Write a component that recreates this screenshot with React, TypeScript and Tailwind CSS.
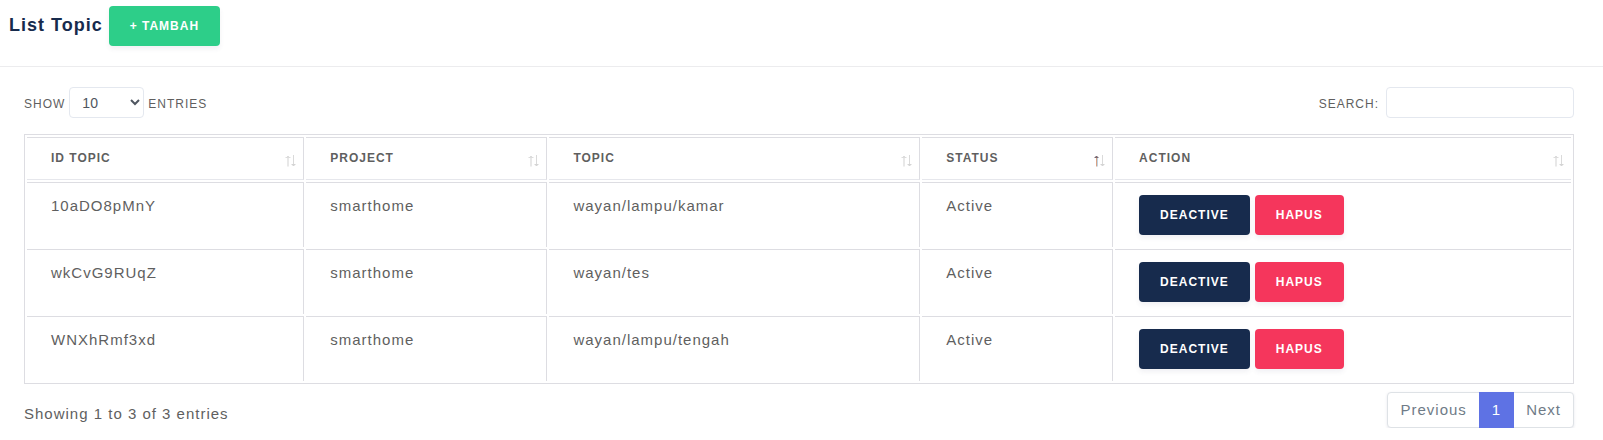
import { useState } from "react";

type Topic = { id: string; project: string; topic: string; status: string };

const topics: Topic[] = [
  { id: "10aDO8pMnY", project: "smarthome", topic: "wayan/lampu/kamar", status: "Active" },
  { id: "wkCvG9RUqZ", project: "smarthome", topic: "wayan/tes", status: "Active" },
  { id: "WNXhRmf3xd", project: "smarthome", topic: "wayan/lampu/tengah", status: "Active" },
];

const columns = [
  { label: "ID Topic", width: "w-[18.05%]" },
  { label: "Project", width: "w-[15.7%]" },
  { label: "Topic", width: "w-[24.15%]" },
  { label: "Status", width: "w-[12.42%]", sorted: true },
  { label: "Action", width: "w-[29.68%]" },
];

const buttonBase =
  "cursor-pointer rounded px-[21px] py-2.5 text-[12px] leading-5 font-bold uppercase tracking-[1px] text-white shadow-[0_3px_5px_rgba(50,50,93,0.07)]";

function SortIcon({ sorted }: { sorted?: boolean }) {
  return (
    <svg width="12" height="12" viewBox="0 0 12 12" fill="none" className="shrink-0" aria-hidden="true">
      {sorted ? (
        <>
          <path d="M3.5 11.5V1" stroke="#d9a184" />
          <path d="M4.5 11.5V3" stroke="#bcd3e2" />
          <path d="M1.5 2.5H5.5M2.5 1.5H4.5" stroke="#7a6a72" />
        </>
      ) : (
        <>
          <path d="M4 11.5V1" stroke="#e8e8e8" strokeWidth="2" />
          <path d="M1.5 2.5H6.5M3 1.5H5" stroke="#dcdcdc" />
        </>
      )}
      <path d="M9.5 0V11" stroke="#dadada" />
      <path d="M7.5 9.5H11.5M8.5 10.5H10.5" stroke="#d4d4d4" />
    </svg>
  );
}

export default function App() {
  const [query, setQuery] = useState("");
  const rows = topics.filter((t) =>
    Object.values(t).some((v) => v.toLowerCase().includes(query.toLowerCase())),
  );

  return (
    <main className="bg-white font-['Liberation_Sans',Arial,sans-serif] text-[15px] leading-6 tracking-[1px] text-[#5f5f5f]">
      <header className="flex items-start gap-1.5 border-b border-[#ececee] px-[9px] pt-1.5 pb-5">
        <h3 className="pt-[7px] text-[18px] leading-6 font-bold text-[#172b4d]">List Topic</h3>
        <button type="button" className={`${buttonBase} bg-[#2dce89]`}>
          + Tambah
        </button>
      </header>

      <div className="pt-5 pr-[29px] pl-6">
        <div className="flex items-center justify-between text-[12px] uppercase">
          <label className="flex items-center gap-1">
            <span className="pt-0.5">Show</span>
            <select className="h-[31px] w-[75px] rounded border border-[#e4e8ef] bg-white px-2 text-[14px] tracking-normal text-[#4f5660]">
              <option>10</option>
              <option>25</option>
              <option>50</option>
              <option>100</option>
            </select>
            <span className="pt-0.5">entries</span>
          </label>
          <label className="flex items-center gap-[7px]">
            <span className="pt-0.5">Search:</span>
            <input
              type="search"
              value={query}
              onChange={(e) => setQuery(e.target.value)}
              className="h-[31px] w-[188px] rounded border border-[#e4e8ef] bg-white px-2 text-[14px] outline-none"
            />
          </label>
        </div>

        <table className="mt-4 w-full table-fixed border-separate border-spacing-[2px] border border-[#dddde2]">
          <thead>
            <tr>
              {columns.map((c) => (
                <th
                  key={c.label}
                  scope="col"
                  className={`${c.width} h-[43px] border-y border-r border-[#dddde2] border-b-[#e6e7ec] pr-[7px] pl-6 text-left align-top text-[12px] leading-4 font-bold uppercase last:border-r-0`}
                >
                  <div className="flex items-start justify-between pt-3">
                    <span>{c.label}</span>
                    <span className="pt-[5px]">
                      <SortIcon sorted={c.sorted} />
                    </span>
                  </div>
                </th>
              ))}
            </tr>
          </thead>
          <tbody>
            {rows.map((t) => (
              <tr key={t.id}>
                {[t.id, t.project, t.topic, t.status].map((value, i) => (
                  <td key={i} className="border-t border-r border-[#dddde2] px-6 pt-[11px] align-top">
                    {value}
                  </td>
                ))}
                <td className="border-t border-[#dddde2] px-6 py-3">
                  <div className="flex gap-[5px]">
                    <button type="button" className={`${buttonBase} bg-[#172b4d]`}>
                      Deactive
                    </button>
                    <button type="button" className={`${buttonBase} bg-[#f5365c]`}>
                      Hapus
                    </button>
                  </div>
                </td>
              </tr>
            ))}
          </tbody>
        </table>

        <div className="flex items-start justify-between pt-2">
          <p className="pt-2.5">Showing 1 to 3 of 3 entries</p>
          <nav
            aria-label="Pages"
            className="flex h-9 rounded border border-[#dee2e6] bg-white text-[#6f7b87] shadow-[0_1px_3px_rgba(50,50,93,0.11)]"
          >
            <a href="#previous" className="px-3 py-[5px]">Previous</a>
            <a href="#1" aria-current="page" className="-my-px bg-[#5e72e4] px-[13px] py-1.5 text-white">1</a>
            <a href="#next" className="px-3 py-[5px]">Next</a>
          </nav>
        </div>
      </div>
    </main>
  );
}
